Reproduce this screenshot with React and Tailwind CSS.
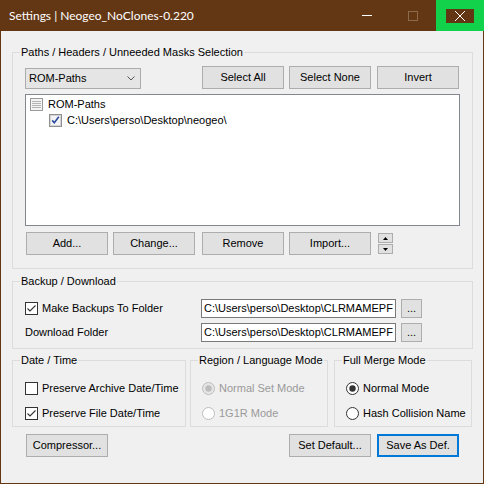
import React from "react";

// Win10 style push button
function Button({ label, primary = false, className = "" }) {
  return (
    <button
      className={`h-[23px] w-[82px] shrink-0 bg-[#e1e1e1] leading-none ${
        primary ? "border-2 border-[#0078d7]" : "border border-[#adadad]"
      } ${className}`}
    >
      {label}
    </button>
  );
}

function GroupBox({ title, className = "", children }) {
  return (
    <fieldset className={`min-w-0 border border-[#dcdcdc] ${className}`}>
      <legend className="ml-[7px] px-[1px] leading-[13px]">{title}</legend>
      {children}
    </fieldset>
  );
}

function CheckBox({ checked }) {
  return (
    <svg width="13" height="13" viewBox="0 0 13 13" className="shrink-0">
      <rect x="0.5" y="0.5" width="12" height="12" fill="#fff" stroke="#333" />
      {checked && (
        <path d="M2.5 6.5 L5 9 L10.5 3.5" fill="none" stroke="#333" strokeWidth="1.1" />
      )}
    </svg>
  );
}

function Radio({ checked, disabled }) {
  const stroke = disabled ? "#bcbcbc" : "#333";
  return (
    <svg width="13" height="13" viewBox="0 0 13 13" className="shrink-0">
      <circle cx="6.5" cy="6.5" r="6" fill={disabled && checked ? "#e6e6e6" : "#fff"} stroke={stroke} />
      {checked && <circle cx="6.5" cy="6.5" r="3.2" fill={disabled ? "#bcbcbc" : "#333"} />}
    </svg>
  );
}

// old-style tree view images
function TreeListIcon() {
  return (
    <svg width="13" height="13" viewBox="0 0 13 13" className="shrink-0">
      <rect x="0.5" y="0.5" width="12" height="12" fill="#f4f4f4" stroke="#9a9a9a" />
      <path d="M2 3.5H11M2 5.5H11M2 7.5H11M2 9.5H11" stroke="#b4b4b4" />
    </svg>
  );
}

function TreeCheck() {
  return (
    <svg width="13" height="13" viewBox="0 0 13 13" className="shrink-0">
      <rect x="0.5" y="0.5" width="12" height="12" fill="#e8e8e8" stroke="#8e8f8f" />
      <rect x="1.5" y="1.5" width="10" height="10" fill="#f4f4f4" stroke="#d4d4d4" />
      <path d="M3.2 6.4 L5.3 8.8 L9.8 2.8" fill="none" stroke="#2a4ba0" strokeWidth="1.6" />
    </svg>
  );
}

function TextBox({ value }) {
  return (
    <div className="ml-auto h-[19px] w-[195px] overflow-hidden whitespace-nowrap border border-[#7a7a7a] bg-white pl-[2px] leading-[17px]">
      {value}
    </div>
  );
}

function BrowseButton() {
  return (
    <button className="ml-[5px] h-[19px] w-[21px] shrink-0 border border-[#adadad] bg-[#e1e1e1] leading-none">
      ...
    </button>
  );
}

export default function App() {
  const backupPath = "C:\\Users\\perso\\Desktop\\CLRMAMEPF";

  return (
    <div className="flex h-[484px] w-[484px] flex-col bg-[#643714] font-['Liberation_Sans',Arial,sans-serif] text-[11px] text-black">
      {/* title bar */}
      <div className="flex h-[31px] shrink-0">
        <div className="flex flex-1 items-center pl-[9px] font-['Lato',sans-serif] text-[12px] text-white">
          Settings | Neogeo_NoClones-0.220
        </div>
        <div className="flex w-[46px] items-center justify-center">
          <div className="h-px w-[10px] bg-white" />
        </div>
        <div className="flex w-[46px] items-center justify-center">
          <div className="h-[10px] w-[10px] border border-[#8c6a4d]" />
        </div>
        <div className="flex w-[48px] items-center justify-center bg-[#12d14b]">
          <div className="flex h-[14px] w-[28px] items-center justify-center bg-[#643714]">
            <svg width="10" height="10" viewBox="0 0 10 10">
              <path d="M0 0L10 10M10 0L0 10" stroke="#fff" strokeWidth="1" />
            </svg>
          </div>
        </div>
      </div>

      <div className="mx-[1px] mb-[1px] flex flex-1 flex-col bg-[#f0f0f0] pl-[11px]">
        {/* paths */}
        <GroupBox title="Paths / Headers / Unneeded Masks Selection" className="mt-[15px] w-[461px] pb-[13px]">
          <div className="mt-[7px] flex items-start">
            <div className="ml-[12px] mt-[2px] flex h-[21px] w-[116px] items-center justify-between border border-[#acacac] bg-[#e5e5e5] pl-[3px] pr-[5px]">
              <span>ROM-Paths</span>
              <svg width="8" height="5" viewBox="0 0 8 5">
                <path d="M0.5 0.5L4 4L7.5 0.5" fill="none" stroke="#555" />
              </svg>
            </div>
            <Button label="Select All" className="ml-[61px]" />
            <Button label="Select None" className="ml-[5px]" />
            <Button label="Invert" className="ml-[6px]" />
          </div>

          <div className="ml-[12px] mt-[5px] h-[132px] w-[435px] border border-[#828790] bg-white pt-px">
            <div className="flex h-[16px] items-center pl-[4px]">
              <TreeListIcon />
              <span className="ml-[5px]">ROM-Paths</span>
            </div>
            <div className="flex h-[16px] items-center pl-[23px]">
              <TreeCheck />
              <span className="ml-[5px]">C:\Users\perso\Desktop\neogeo\</span>
            </div>
          </div>

          <div className="mt-[6px] flex items-start">
            <Button label="Add..." className="ml-[13px]" />
            <Button label="Change..." className="ml-[5px]" />
            <Button label="Remove" className="ml-[7px]" />
            <Button label="Import..." className="ml-[5px]" />
            <div className="ml-[7px] mt-px flex flex-col gap-px">
              <button className="flex h-[10px] w-[15px] items-center justify-center border border-[#adadad] bg-[#e1e1e1]">
                <svg width="5" height="3" viewBox="0 0 5 3"><path d="M2.5 0L5 3H0Z" fill="#000" /></svg>
              </button>
              <button className="flex h-[10px] w-[15px] items-center justify-center border border-[#adadad] bg-[#e1e1e1]">
                <svg width="5" height="3" viewBox="0 0 5 3"><path d="M0 0H5L2.5 3Z" fill="#000" /></svg>
              </button>
            </div>
          </div>
        </GroupBox>

        {/* backup */}
        <GroupBox title="Backup / Download" className="mt-[6px] w-[461px] pb-[6px]">
          <div className="mt-[11px] flex items-center pl-[12px] pr-[50px]">
            <CheckBox checked />
            <span className="ml-[4px]">Make Backups To Folder</span>
            <TextBox value={backupPath} />
            <BrowseButton />
          </div>
          <div className="mt-[5px] flex items-center pl-[12px] pr-[50px]">
            <span>Download Folder</span>
            <TextBox value={backupPath} />
            <BrowseButton />
          </div>
        </GroupBox>

        {/* option groups */}
        <div className="mt-[5px] flex items-start leading-[13px]">
          <GroupBox title="Date / Time" className="h-[73px] w-[174px]">
            <div className="mt-[15px] flex h-[13px] items-center pl-[12px]">
              <CheckBox />
              <span className="ml-[4px]">Preserve Archive Date/Time</span>
            </div>
            <div className="mt-[12px] flex h-[13px] items-center pl-[12px]">
              <CheckBox checked />
              <span className="ml-[4px]">Preserve File Date/Time</span>
            </div>
          </GroupBox>
          <GroupBox title="Region / Language Mode" className="ml-[4px] h-[73px] w-[138px]">
            <div className="mt-[15px] flex h-[13px] items-center pl-[11px] text-[#9a9a9a]">
              <Radio checked disabled />
              <span className="ml-[4px]">Normal Set Mode</span>
            </div>
            <div className="mt-[12px] flex h-[13px] items-center pl-[11px] text-[#9a9a9a]">
              <Radio disabled />
              <span className="ml-[4px]">1G1R Mode</span>
            </div>
          </GroupBox>
          <GroupBox title="Full Merge Mode" className="ml-[6px] h-[73px] w-[138px]">
            <div className="mt-[15px] flex h-[13px] items-center pl-[11px]">
              <Radio checked />
              <span className="ml-[4px]">Normal Mode</span>
            </div>
            <div className="mt-[12px] flex h-[13px] items-center pl-[11px]">
              <Radio />
              <span className="ml-[4px]">Hash Collision Name</span>
            </div>
          </GroupBox>
        </div>

        <div className="mt-[7px] flex">
          <Button label="Compressor..." className="ml-[14px]" />
          <Button label="Set Default..." className="ml-[181px]" />
          <Button label="Save As Def." primary className="ml-[6px]" />
        </div>
      </div>
    </div>
  );
}
